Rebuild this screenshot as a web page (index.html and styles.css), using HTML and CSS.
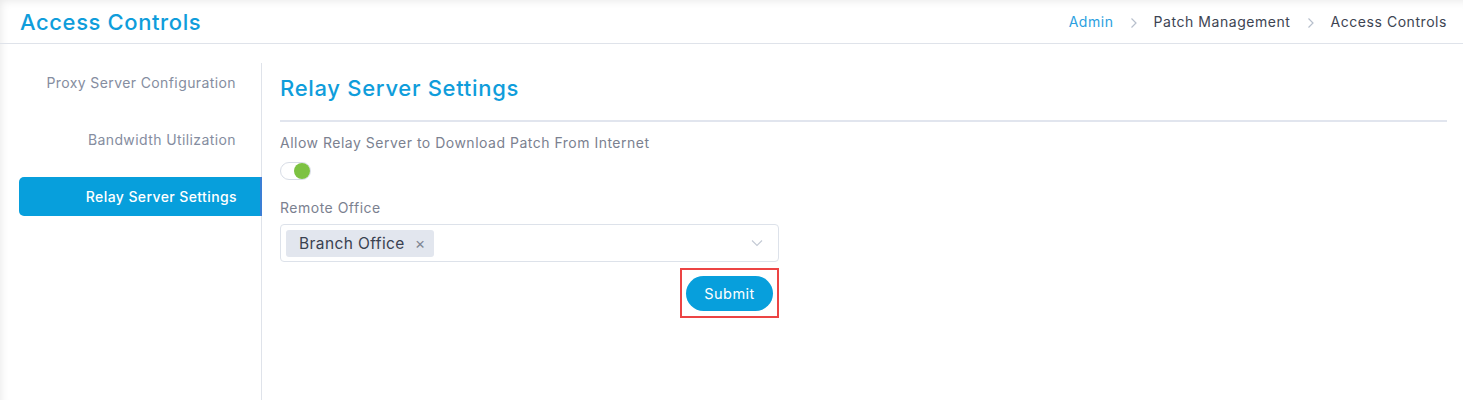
FILE: index.html
```html
<!DOCTYPE html>
<html>
<head>
    <title>Access Controls</title>
    <link rel="stylesheet" href="styles.css">
</head>
<body>
    <div class="page">
        <div class="topbar">
            <h1 class="page-title">Access Controls</h1>
            <div class="crumbs">
                <a class="crumb crumb-link" href="#">Admin</a>
                <svg class="crumb-sep" width="8" height="12" viewBox="0 0 8 12"><path d="M1.5 1.5 L6 6 L1.5 10.5" fill="none" stroke="#b7bfcc" stroke-width="1.2"/></svg>
                <span class="crumb">Patch Management</span>
                <svg class="crumb-sep" width="8" height="12" viewBox="0 0 8 12"><path d="M1.5 1.5 L6 6 L1.5 10.5" fill="none" stroke="#b7bfcc" stroke-width="1.2"/></svg>
                <span class="crumb">Access Controls</span>
            </div>
        </div>

        <div class="layout">
            <div class="sidebar">
                <a class="side-item" href="#">Proxy Server Configuration</a>
                <a class="side-item" href="#">Bandwidth Utilization</a>
                <a class="side-item active" href="#">Relay Server Settings</a>
            </div>

            <div class="content">
                <h2 class="section-title">Relay Server Settings</h2>

                <form class="settings-form">
                    <label class="field-label">Allow Relay Server to Download Patch From Internet</label>
                    <div class="toggle on"><span class="knob"></span></div>

                    <label class="field-label remote-label">Remote Office</label>
                    <div class="select-box">
                        <span class="tag">Branch Office <span class="tag-x">&times;</span></span>
                        <svg class="select-arrow" width="12" height="8" viewBox="0 0 12 8"><path d="M1 1.5 L6 6.5 L11 1.5" fill="none" stroke="#c3c9d4" stroke-width="1.1"/></svg>
                    </div>

                    <div class="submit-row">
                        <div class="highlight">
                            <button type="button" class="btn-submit">Submit</button>
                        </div>
                    </div>
                </form>
            </div>
        </div>
    </div>
</body>
</html>
```

FILE: styles.css
```css
body {
    margin: 0;
    padding: 0;
    font-family: "Inter", "Noto Sans", sans-serif;
    background-color: #fff;
}

.page {
    height: 400px;
    overflow: hidden;
    box-shadow: inset 5px 5px 8px -4px rgba(0, 0, 0, 0.09);
}

.topbar {
    display: flex;
    justify-content: space-between;
    align-items: center;
    height: 43px;
    padding: 0 16px 0 20px;
    border-bottom: 1px solid #dfe3ea;
}

.page-title {
    margin: 0;
    font-size: 22px;
    font-weight: 500;
    color: #0f9ddb;
    letter-spacing: 0.6px;
}

.crumbs {
    display: flex;
    align-items: center;
    gap: 16px;
    font-size: 14px;
    letter-spacing: 0.55px;
}

.crumb {
    color: #3d4452;
    text-decoration: none;
}

.crumb-link {
    color: #2d9fe0;
}

.crumb-sep {
    margin-top: 3px;
}

.layout {
    display: flex;
    margin-top: 19px;
    height: 338px;
}

.sidebar {
    width: 242px;
    padding-left: 19px;
    border-right: 1px solid #dfe3ea;
    display: flex;
    flex-direction: column;
    gap: 18px;
}

.side-item {
    height: 39px;
    display: flex;
    align-items: center;
    justify-content: flex-end;
    padding-right: 25px;
    font-size: 14px;
    letter-spacing: 0.4px;
    color: #858da0;
    text-decoration: none;
}

.side-item.active {
    background-color: #079fdc;
    color: #fff;
    font-weight: 500;
    border-radius: 5px 0 0 5px;
    border-right: 2px solid #3a7fd5;
    padding-right: 23px;
    margin-right: -1px;
}

.content {
    flex: 1;
    padding: 0 16px 0 18px;
}

.section-title {
    margin: 0;
    padding: 10px 0 17px;
    line-height: 30px;
    font-size: 22px;
    font-weight: 500;
    color: #0f9ddb;
    letter-spacing: 0.7px;
    border-bottom: 2px solid #e1e5ee;
}

.settings-form {
    width: 499px;
    display: flex;
    flex-direction: column;
}

.field-label {
    margin-top: 11px;
    line-height: 20px;
    font-size: 14px;
    letter-spacing: 0.5px;
    color: #7b8190;
}

.toggle {
    margin-top: 9px;
    width: 29px;
    height: 16px;
    border: 1px solid #d8dde6;
    border-radius: 9px;
    position: relative;
    background: #fff;
}

.toggle .knob {
    position: absolute;
    top: 0;
    right: 0;
    width: 16px;
    height: 16px;
    border-radius: 50%;
    background-color: #7dc242;
}

.remote-label {
    margin-top: 18px;
}

.select-box {
    margin-top: 6px;
    height: 36px;
    border: 1px solid #dde2ea;
    border-radius: 4px;
    display: flex;
    align-items: center;
    padding: 0 15px 0 5px;
    justify-content: space-between;
}

.tag {
    height: 27px;
    display: flex;
    align-items: center;
    padding: 0 8px 0 13px;
    background-color: #e2e6ee;
    border-radius: 3px;
    font-size: 15.5px;
    letter-spacing: 0.4px;
    color: #394150;
}

.tag-x {
    margin-left: 10px;
    font-size: 16px;
    color: #7f8693;
}

.submit-row {
    display: flex;
    justify-content: flex-end;
    margin-top: 6px;
}

.highlight {
    border: 2px solid #ec4444;
    padding: 6px 4px 5px 4px;
}

.btn-submit {
    width: 87px;
    height: 35px;
    border: none;
    border-radius: 18px;
    background-color: #079fdc;
    color: #fff;
    font-family: inherit;
    font-size: 14.5px;
    font-weight: 400;
    letter-spacing: 0.5px;
    cursor: pointer;
}
```
